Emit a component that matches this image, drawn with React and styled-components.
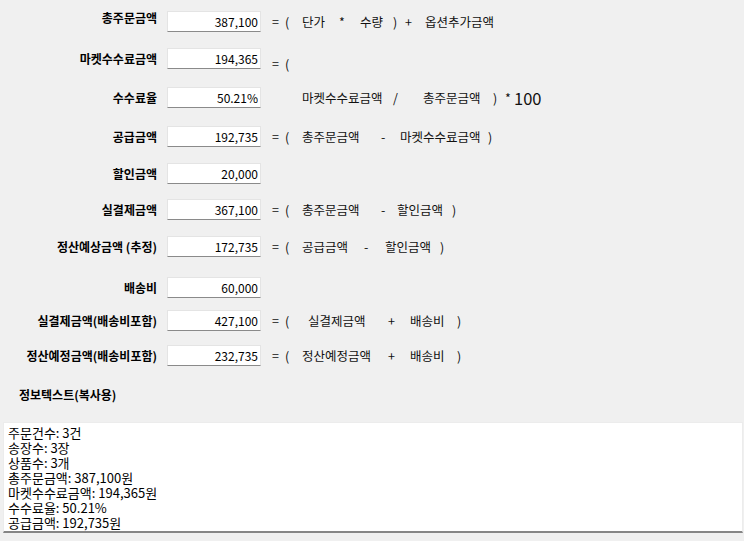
import React from 'react';
import styled, { createGlobalStyle } from 'styled-components';

const Global = createGlobalStyle`
  html, body { margin: 0; padding: 0; background: #f0f0f0; }
  body { font-family: "Noto Sans CJK KR", "Noto Sans", sans-serif; color: #000; }
`;

const Page = styled.div`
  width: 744px;
  height: 541px;
  overflow: hidden;
  box-sizing: border-box;
  padding-top: 11px;
  display: flex;
  flex-direction: column;
`;

const Row = styled.div`
  display: flex;
  align-items: center;
  height: 21px;
  margin-top: ${(p) => p.$gap}px;
`;

const Label = styled.div`
  width: 157px;
  flex-shrink: 0;
  text-align: right;
  font-size: 12px;
  font-weight: 700;
  line-height: 16px;
  white-space: nowrap;
  padding-bottom: ${(p) => (p.$raise ? 8 : 0)}px;
`;

const Field = styled.input`
  width: 94px;
  height: 21px;
  box-sizing: border-box;
  margin: 0 0 0 10px;
  flex-shrink: 0;
  border: 1px solid #e4e4e4;
  border-bottom-color: #8a8a8a;
  background: #fff;
  text-align: right;
  padding: 0 2px 0 0;
  font-family: "Noto Sans CJK KR", "Noto Sans", sans-serif;
  font-size: 12px;
  color: #000;
  outline: none;
`;

const Formula = styled.div`
  display: flex;
  align-items: center;
  padding-left: ${(p) => p.$indent}px;
  padding-top: ${(p) => (p.$drop ? 10 : 0)}px;
`;

const Token = styled.span`
  display: inline-block;
  flex-shrink: 0;
  width: ${(p) => (p.$w ? `${p.$w}px` : 'auto')};
  font-size: ${(p) => (p.$big ? 16.5 : 12.5)}px;
  line-height: 18px;
  white-space: nowrap;
  color: #111;
`;

const InfoTitle = styled.div`
  margin-top: 21px;
  padding-left: 19px;
  font-size: 12px;
  font-weight: 700;
  line-height: 16px;
`;

const InfoBox = styled.div`
  margin: 19px 0 0 3px;
  width: 740px;
  height: 111px;
  box-sizing: border-box;
  background: #fff;
  border: 1px solid #ececec;
  border-bottom: 2px solid #868686;
  padding: 2px 4px;
  font-size: 13px;
  line-height: 15px;
  white-space: pre-line;
  color: #000;
`;

const INPUT_END = 261;

const rows = [
  { label: '총주문금액', value: '387,100', gap: 0, raise: true,
    f: [['=', 272], ['(', 285], ['단가', 302], ['*', 339], ['수량', 360], [')', 393], ['+', 405], ['옵션추가금액', 425]] },
  { label: '마켓수수료금액', value: '194,365', gap: 16, drop: true,
    f: [['=', 272], ['(', 285]] },
  { label: '수수료율', value: '50.21%', gap: 18,
    f: [['마켓수수료금액', 302], ['/', 393], ['총주문금액', 423], [')', 493], ['*', 505], ['100', 514, true]] },
  { label: '공급금액', value: '192,735', gap: 18,
    f: [['=', 272], ['(', 285], ['총주문금액', 302], ['-', 381], ['마켓수수료금액', 400], [')', 488]] },
  { label: '할인금액', value: '20,000', gap: 16, f: [] },
  { label: '실결제금액', value: '367,100', gap: 15,
    f: [['=', 272], ['(', 285], ['총주문금액', 302], ['-', 381], ['할인금액', 397], [')', 452]] },
  { label: '정산예상금액 (추정)', value: '172,735', gap: 16,
    f: [['=', 272], ['(', 285], ['공급금액', 302], ['-', 364], ['할인금액', 385], [')', 440]] },
  { label: '배송비', value: '60,000', gap: 20, f: [] },
  { label: '실결제금액(배송비포함)', value: '427,100', gap: 12,
    f: [['=', 272], ['(', 285], ['실결제금액', 308], ['+', 388], ['배송비', 410], [')', 457]] },
  { label: '정산예정금액(배송비포함)', value: '232,735', gap: 14,
    f: [['=', 272], ['(', 285], ['정산예정금액', 302], ['+', 388], ['배송비', 410], [')', 457]] },
];

const infoText = `주문건수: 3건
송장수: 3장
상품수: 3개
총주문금액: 387,100원
마켓수수료금액: 194,365원
수수료율: 50.21%
공급금액: 192,735원`;

function FormulaLine({ tokens, drop }) {
  if (!tokens.length) return null;
  return (
    <Formula $indent={tokens[0][1] - INPUT_END} $drop={drop}>
      {tokens.map(([text, x, big], i) => {
        const next = tokens[i + 1];
        return (
          <Token key={i} $w={next ? next[1] - x : 0} $big={big}>
            {text}
          </Token>
        );
      })}
    </Formula>
  );
}

export default function App() {
  return (
    <>
      <Global />
      <Page>
        {rows.map((r) => (
          <Row key={r.label} $gap={r.gap}>
            <Label $raise={r.raise}>{r.label}</Label>
            <Field readOnly value={r.value} />
            <FormulaLine tokens={r.f} drop={r.drop} />
          </Row>
        ))}
        <InfoTitle>정보텍스트(복사용)</InfoTitle>
        <InfoBox>{infoText}</InfoBox>
      </Page>
    </>
  );
}
